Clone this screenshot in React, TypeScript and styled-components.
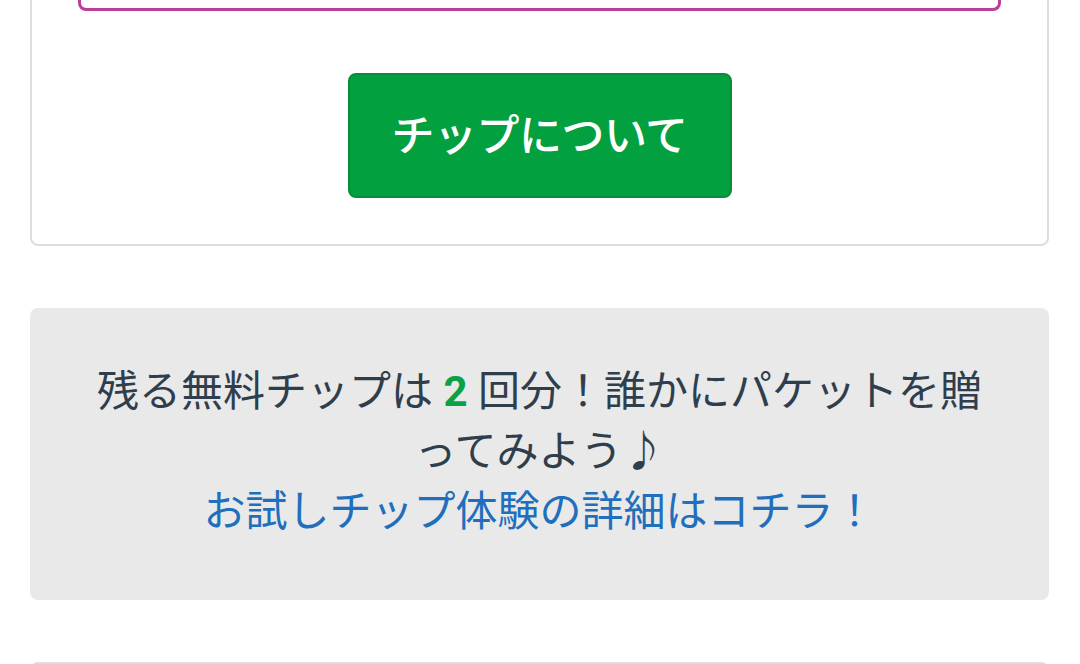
import React from 'react';
import styled, { createGlobalStyle } from 'styled-components';

const GlobalStyle = createGlobalStyle`
  html, body {
    margin: 0;
    padding: 0;
    background: #ffffff;
    overflow: hidden;
  }
  body {
    font-family: Roboto, "Noto Sans CJK JP", "Noto Sans", sans-serif;
    color: #2f3e4c;
  }
`;

// page is scrolled: the top card starts above the viewport
const Page = styled.div`
  display: flex;
  flex-direction: column;
  gap: 62px;
  padding: 0 31px 0 30px;
  margin-top: -90px;
`;

const Card = styled.section`
  background: #fff;
  border: 2px solid #dddddd;
  border-radius: 8px;
  padding: 0 46px 46px;
  display: flex;
  flex-direction: column;
  align-items: center;
`;

const FormBox = styled.div`
  align-self: stretch;
  height: 96px;
  border: 3px solid #bb3e9b;
  border-top: none;
  border-radius: 0 0 8px 8px;
`;

const TipButton = styled.button`
  margin-top: 62px;
  width: 384px;
  height: 125px;
  padding: 0 0 8px;
  background: #02a03f;
  border: 2px solid #0c8c3b;
  border-radius: 8px;
  color: #fff;
  font-family: "Noto Sans CJK JP", sans-serif;
  font-size: 43px;
  font-weight: 500;
  letter-spacing: -0.5px;
  cursor: pointer;
`;

const Notice = styled.div`
  background: #e9e9e9;
  border-radius: 8px;
  padding: 54px 50px 58px;
  text-align: center;
  font-size: 42px;
  line-height: 60px;
  color: #2f3e4c;
`;

const Count = styled.strong`
  color: #0aa246;
  font-weight: 700;
  font-family: Roboto, sans-serif;
`;

const DetailLink = styled.a`
  color: #1f6fbd;
  text-decoration: none;
`;

const NextCard = styled.section`
  height: 80px;
  border: 2px solid #dddddd;
  border-radius: 8px;
  background: #fff;
`;

export default function App() {
  return (
    <>
      <GlobalStyle />
      <Page>
        <Card>
          <FormBox />
          <TipButton>チップについて</TipButton>
        </Card>
        <Notice>
          残る無料チップは <Count>2</Count> 回分！誰かにパケットを贈
          <br />
          ってみよう♪
          <br />
          <DetailLink href="#">お試しチップ体験の詳細はコチラ！</DetailLink>
        </Notice>
        <NextCard />
      </Page>
    </>
  );
}
